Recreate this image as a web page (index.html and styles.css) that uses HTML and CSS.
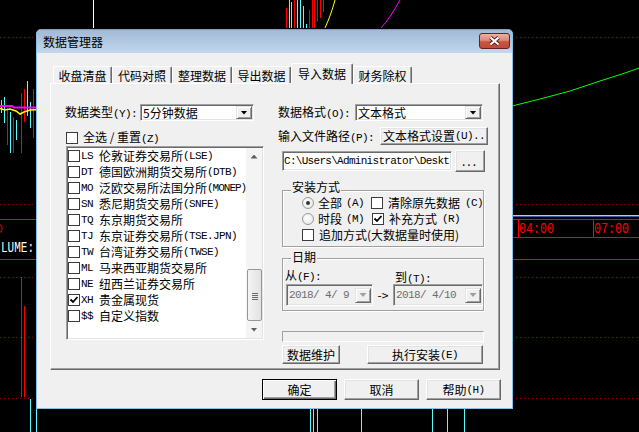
FILE: index.html
```html
<!DOCTYPE html>
<html lang="zh-CN">
<head>
	<meta charset="UTF-8">
	<title>数据管理器</title>
	<link rel="stylesheet" href="styles.css">
</head>
<body>
	<!-- 行情背景 -->
	<svg class="chart" width="639" height="432" viewBox="0 0 639 432">
		<g stroke="#a00000" stroke-dasharray="1 3">
			<line x1="0" y1="37.5" x2="639" y2="37.5"/>
			<line x1="0" y1="204.5" x2="639" y2="204.5"/>
			<line x1="0" y1="277.5" x2="639" y2="277.5"/>
			<line x1="0" y1="337.5" x2="639" y2="337.5"/>
			<line x1="0" y1="398.5" x2="639" y2="398.5"/>
		</g>
		<g stroke="#f00">
			<line x1="0" y1="219.5" x2="639" y2="219.5"/>
			<line x1="0" y1="259.5" x2="639" y2="259.5"/>
			<line x1="480" y1="237.5" x2="639" y2="237.5"/>
			<line x1="518.5" y1="219" x2="518.5" y2="237"/>
			<line x1="593.5" y1="219" x2="593.5" y2="237"/>
			<line x1="21.5" y1="277" x2="21.5" y2="397"/>
			<line x1="24.5" y1="306" x2="24.5" y2="397"/>
			<rect x="-20" y="224.5" width="22" height="8" rx="3" fill="none"/>
		</g>
		<line x1="512" y1="215.5" x2="639" y2="215.5" stroke="#c8c8c8"/>
		<line x1="512" y1="216.5" x2="639" y2="216.5" stroke="#3c5a96"/>
		<text x="519" y="233" fill="#f00" class="chart_txt" textLength="35" lengthAdjust="spacingAndGlyphs">04:00</text>
		<text x="594" y="233" fill="#f00" class="chart_txt" textLength="35" lengthAdjust="spacingAndGlyphs">07:00</text>
		<text x="1" y="252" fill="#fff" class="chart_txt" textLength="33" lengthAdjust="spacingAndGlyphs">LUME:</text>

		<!-- 左侧K线 -->
		<g stroke="#55fcfc">
			<line x1="1.5" y1="100" x2="1.5" y2="113"/>
			<line x1="4.5" y1="97" x2="4.5" y2="123"/>
			<line x1="10.5" y1="112" x2="10.5" y2="153"/>
			<line x1="16.5" y1="120" x2="16.5" y2="140"/>
			<line x1="27.5" y1="81" x2="27.5" y2="116"/>
			<line x1="30.5" y1="102" x2="30.5" y2="128"/>
			<line x1="30.5" y1="399" x2="30.5" y2="432"/>
			<line x1="36.5" y1="400" x2="36.5" y2="432"/>
			<line x1="310.5" y1="400" x2="310.5" y2="432"/>
			<line x1="313.5" y1="400" x2="313.5" y2="432"/>
			<line x1="317.5" y1="400" x2="317.5" y2="432"/>
			<line x1="361.5" y1="400" x2="361.5" y2="432"/>
			<line x1="432.5" y1="400" x2="432.5" y2="432"/>
			<line x1="447.5" y1="400" x2="447.5" y2="432"/>
			<line x1="464.5" y1="400" x2="464.5" y2="432"/>
		</g>
		<g stroke="#f00">
			<line x1="7.5" y1="108" x2="7.5" y2="145"/>
			<line x1="13.5" y1="117" x2="13.5" y2="153"/>
			<line x1="21.5" y1="93" x2="21.5" y2="153"/>
			<line x1="24.5" y1="89" x2="24.5" y2="122"/>
			<line x1="33.5" y1="89" x2="33.5" y2="138"/>
		</g>
		<polyline points="0,106 12,106 14,107.5 40,107.5" fill="none" stroke="#f0f" stroke-width="2"/>
		<polyline points="0,108.5 5,110 10,109 16,111 20,114 24,112 30,110 40,109.5" fill="none" stroke="#ff0" stroke-width="1.5"/>

		<!-- 上方K线 -->
		<line x1="93.5" y1="0" x2="93.5" y2="28" stroke="#fff"/>
		<g stroke="#55fcfc">
			<line x1="289.5" y1="0" x2="289.5" y2="28"/>
			<line x1="291.5" y1="2" x2="291.5" y2="28"/>
			<line x1="297.5" y1="0" x2="297.5" y2="28"/>
			<line x1="300.5" y1="0" x2="300.5" y2="28"/>
			<line x1="303.5" y1="6" x2="303.5" y2="28"/>
			<line x1="306.5" y1="24" x2="306.5" y2="28"/>
		</g>
		<g stroke="#f00">
			<line x1="286.5" y1="8" x2="286.5" y2="28"/>
			<line x1="294.5" y1="0" x2="294.5" y2="28"/>
			<line x1="309.5" y1="10" x2="309.5" y2="28"/>
			<line x1="312.5" y1="0" x2="312.5" y2="28"/>
			<line x1="314.5" y1="0" x2="314.5" y2="28"/>
			<line x1="317.5" y1="0" x2="317.5" y2="21"/>
			<line x1="320.5" y1="0" x2="320.5" y2="18"/>
			<line x1="323.5" y1="0" x2="323.5" y2="12"/>
		</g>
		<polyline points="325,28 328,21 331,13 333,7 335,0" fill="none" stroke="#ff0"/>
		<polyline points="381,28 386,22 391,15 396,7 400,0" fill="none" stroke="#f0f"/>
		<polyline points="512,106 540,99 570,91 600,81 625,73 639,68" fill="none" stroke="#0f0"/>
	</svg>

	<div class="dlg">
		<div class="dlg_title">
			<span>数据管理器</span>
			<a href="javascript:;" class="dlg_close">
				<svg width="13" height="10" viewBox="0 0 13 10">
					<path d="M2.5 1.5 L10.5 8.5 M10.5 1.5 L2.5 8.5" stroke="#4b1e19" stroke-width="4" fill="none"/>
					<path d="M2.5 1.5 L10.5 8.5 M10.5 1.5 L2.5 8.5" stroke="#fff" stroke-width="2.2" fill="none"/>
				</svg>
			</a>
		</div>

		<div class="dlg_body">
			<div class="tabs">
				<div class="tab tab_s">收盘清盘</div>
				<div class="tab">代码对照</div>
				<div class="tab">整理数据</div>
				<div class="tab tab_s">导出数据</div>
				<div class="tab current">导入数据</div>
				<div class="tab tab_s">财务除权</div>
			</div>

			<div class="panel">
				<div class="col_l">
					<div class="row">
						<span class="lbl_type">数据类型<span class="en">(Y):</span></span>
						<div class="sel sel_type"><span class="sel_text">5分钟数据</span><span class="sel_btn"><i></i></span></div>
					</div>
					<div class="chk_row">
						<span class="chk"></span>
						<span>全选 / 重置<span class="en">(Z)</span></span>
					</div>
					<div class="list">
						<div class="list_items">
							<div class="item"><span class="chk"></span><span class="code">LS</span>伦敦证券交易所<span class="en">(LSE)</span></div>
							<div class="item"><span class="chk"></span><span class="code">DT</span>德国欧洲期货交易所<span class="en">(DTB)</span></div>
							<div class="item"><span class="chk"></span><span class="code">MO</span>泛欧交易所法国分所<span class="en en_tight">(MONEP)</span></div>
							<div class="item"><span class="chk"></span><span class="code">SN</span>悉尼期货交易所<span class="en">(SNFE)</span></div>
							<div class="item"><span class="chk"></span><span class="code">TQ</span>东京期货交易所</div>
							<div class="item"><span class="chk"></span><span class="code">TJ</span>东京证券交易所<span class="en">(TSE.JPN)</span></div>
							<div class="item"><span class="chk"></span><span class="code">TW</span>台湾证券交易所<span class="en">(TWSE)</span></div>
							<div class="item"><span class="chk"></span><span class="code">ML</span>马来西亚期货交易所</div>
							<div class="item"><span class="chk"></span><span class="code">NE</span>纽西兰证券交易所</div>
							<div class="item"><span class="chk on"><svg width="10" height="10" viewBox="0 0 10 10"><path d="M1.5 4.5 L4 7 L8.5 2" stroke="#000" stroke-width="1.8" fill="none"/></svg></span><span class="code">XH</span>贵金属现货</div>
							<div class="item"><span class="chk"></span><span class="code">$$</span>自定义指数</div>
						</div>
						<div class="scroll">
							<div class="scroll_btn"><i class="arr_up"></i></div>
							<div class="scroll_track"><div class="thumb"><span class="grip"></span></div></div>
							<div class="scroll_btn"><i class="arr_down"></i></div>
						</div>
					</div>
				</div>

				<div class="col_r">
					<div class="row">
						<span class="lbl_fmt">数据格式<span class="en">(O):</span></span>
						<div class="sel sel_fmt"><span class="sel_text">文本格式</span><span class="sel_btn"><i></i></span></div>
					</div>
					<div class="row2">
						<span class="lbl_path">输入文件路径<span class="en">(P):</span></span>
						<button class="btn btn_set">文本格式设置<span class="en">(U)..</span></button>
					</div>
					<div class="row3">
						<div class="path">C:\Users\Administrator\Deskt</div>
						<button class="btn btn_more">...</button>
					</div>

					<div class="group group_mode">
						<span class="group_title">安装方式</span>
						<div class="grow">
							<label class="opt"><span class="radio on"></span>全部<span class="en">(A)</span></label>
							<label class="opt opt_c"><span class="chk"></span>清除原先数据<span class="en">(C)</span></label>
						</div>
						<div class="grow">
							<label class="opt"><span class="radio"></span>时段<span class="en">(M)</span></label>
							<label class="opt opt_c"><span class="chk on"><svg width="10" height="10" viewBox="0 0 10 10"><path d="M1.5 4.5 L4 7 L8.5 2" stroke="#000" stroke-width="1.8" fill="none"/></svg></span>补充方式<span class="en">(R)</span></label>
						</div>
						<div class="grow">
							<label class="opt opt_c"><span class="chk"></span>追加方式(大数据量时使用)</label>
						</div>
					</div>

					<div class="group group_date">
						<span class="group_title">日期</span>
						<div class="date_row">
							<div class="date_col date_from">
								<span class="date_lbl">从<span class="en">(F):</span></span>
								<div class="date"><span class="date_text">2018/ 4/ 9</span><span class="sel_btn off"><i></i></span></div>
							</div>
							<span class="date_arrow">-&gt;</span>
							<div class="date_col date_to">
								<span class="date_lbl">到<span class="en">(T):</span></span>
								<div class="date"><span class="date_text">2018/ 4/10</span><span class="sel_btn off"><i></i></span></div>
							</div>
						</div>
					</div>

					<div class="progress"></div>

					<div class="act_row">
						<button class="btn btn_keep">数据维护</button>
						<button class="btn btn_run">执行安装<span class="en">(E)</span></button>
					</div>
				</div>
			</div>

			<div class="footer">
				<button class="btn btn_def">确定</button>
				<button class="btn">取消</button>
				<button class="btn">帮助<span class="en">(H)</span></button>
			</div>
		</div>
	</div>
</body>
</html>
```

FILE: styles.css
```css
body {
	margin: 0;
	width: 639px;
	height: 432px;
	overflow: hidden;
	position: relative;
	background: #000;
	font: 12px/14px "Noto Sans CJK SC", "Noto Sans", sans-serif;
	color: #000;
}

.chart { position: absolute; left: 0; top: 0; }
.chart_txt { font-family: "Liberation Mono", monospace; font-size: 14px; }

/* 半角字符(宋体宽度) */
.en {
	font: 11px "Liberation Mono", monospace;
	letter-spacing: -0.6px;
}
.en_tight { letter-spacing: -1px; }

/* 对话框 */
.dlg {
	position: absolute;
	left: 36px;
	top: 29px;
	width: 477px;
	height: 380px;
	box-sizing: border-box;
	border: 1px solid #86c2e6;
	border-top-color: #7f9cbd;
	border-radius: 5px 5px 0 0;
	background: #f0f0f0;
	display: flex;
	flex-direction: column;
}

.dlg_title {
	height: 23px;
	flex-shrink: 0;
	display: flex;
	justify-content: space-between;
	align-items: center;
	padding: 0 2px 0 6px;
	background: linear-gradient(#a1b9d6, #c3d7ee);
	border-radius: 4px 4px 0 0;
}

.dlg_close {
	align-self: flex-start;
	margin-top: 3px;
	width: 31px;
	height: 16px;
	box-sizing: border-box;
	border: 1px solid #5d2620;
	border-radius: 3px;
	background: linear-gradient(#eab0a4 0%, #dc8a7b 45%, #c95542 55%, #c24a36 100%);
	display: flex;
	align-items: center;
	justify-content: center;
}

.dlg_close svg { display: block; }

.dlg_body { flex: 1; padding: 10px 11px 0 13px; }

/* 标签页 */
.tabs {
	display: flex;
	align-items: flex-end;
	height: 20px;
	padding-left: 3px;
	position: relative;
	z-index: 1;
}

.tab {
	box-sizing: border-box;
	width: 60px;
	height: 17px;
	border: 1px solid;
	border-color: #fff #696969 transparent #fff;
	border-bottom: 0;
	border-radius: 2px 2px 0 0;
	box-shadow: inset -1px 0 #a0a0a0;
	padding-top: 2px;
	text-align: center;
	line-height: 14px;
}

.tab_s { width: 59px; }

.tab.current {
	width: 62px;
	height: 21px;
	margin-bottom: -1px;
	padding-top: 3px;
	background: #f0f0f0;
}

.panel {
	box-sizing: border-box;
	width: 450px;
	height: 287px;
	border: 1px solid;
	border-color: #fff #696969 #696969 #fff;
	box-shadow: inset -1px -1px #a0a0a0;
	display: flex;
	gap: 14px;
	padding: 20px 11px 0 14px;
}

.col_l { width: 199px; display: flex; flex-direction: column; }
.col_r { width: 210px; display: flex; flex-direction: column; }

.row { display: flex; align-items: center; height: 17px; flex-shrink: 0; }
.lbl_type { width: 75px; }
.lbl_fmt { width: 77px; }

/* 下拉框 */
.sel {
	box-sizing: border-box;
	height: 17px;
	border: 1px solid;
	border-color: #a0a0a0 #fff #fff #a0a0a0;
	box-shadow: inset 1px 1px #696969, inset -1px -1px #e3e3e3;
	background: #fff;
	padding: 1px;
	display: flex;
}
.sel_type { width: 114px; }
.sel_fmt { width: 128px; }

.sel_text { flex: 1; padding-left: 1px; line-height: 13px; background: #fff; }

.sel_btn {
	box-sizing: border-box;
	width: 16px;
	height: 13px;
	flex-shrink: 0;
	background: #f0f0f0;
	border: 1px solid;
	border-color: #e3e3e3 #696969 #696969 #e3e3e3;
	box-shadow: inset 1px 1px #fff, inset -1px -1px #a0a0a0;
	display: flex;
	align-items: center;
	justify-content: center;
}
.sel_btn i {
	display: block;
	width: 7px;
	height: 4px;
	background: #000;
	clip-path: polygon(0 0, 100% 0, 50% 100%);
}
.sel_btn.off { height: 15px; }
.sel_btn.off i { background: #a0a0a0; }

/* 复选框 */
.chk_row {
	margin-top: 10px;
	height: 13px;
	display: flex;
	align-items: center;
	gap: 5px;
	padding-left: 1px;
}

.chk {
	box-sizing: border-box;
	width: 12px;
	height: 12px;
	flex-shrink: 0;
	border: 1px solid #3c3c3c;
	background: #fff;
}
.chk svg { display: block; }

.radio {
	box-sizing: border-box;
	width: 12px;
	height: 12px;
	flex-shrink: 0;
	border-radius: 50%;
	border: 1px solid #9a9a9a;
	background: radial-gradient(circle at 40% 40%, #fff, #e2e2e2);
	display: flex;
	align-items: center;
	justify-content: center;
}
.radio.on::after {
	content: "";
	width: 4px;
	height: 4px;
	border-radius: 50%;
	background: #333;
}

/* 市场列表 */
.list {
	margin: 2px 0 0 1px;
	width: 198px;
	height: 194px;
	box-sizing: border-box;
	border: 1px solid;
	border-color: #a0a0a0 #fff #fff #a0a0a0;
	box-shadow: inset 1px 1px #696969, inset -1px -1px #e3e3e3;
	padding: 1px;
	background: #fff;
	display: flex;
}

.list_items { flex: 1; min-width: 0; }

.item {
	height: 16px;
	display: flex;
	align-items: center;
	white-space: nowrap;
}
.item .chk { margin-right: 1px; }

.code {
	width: 18px;
	flex-shrink: 0;
	font: 11px "Liberation Mono", monospace;
	letter-spacing: -0.6px;
}

.scroll {
	width: 16px;
	flex-shrink: 0;
	display: flex;
	flex-direction: column;
	background: #f4f4f4;
}
.scroll_btn {
	height: 17px;
	display: flex;
	align-items: center;
	justify-content: center;
}
.scroll_btn i {
	display: block;
	width: 7px;
	height: 4px;
	background: #606060;
}
.arr_up { clip-path: polygon(50% 0, 100% 100%, 0 100%); }
.arr_down { clip-path: polygon(0 0, 100% 0, 50% 100%); }

.scroll_track { flex: 1; }

.thumb {
	box-sizing: border-box;
	margin: 104px 0 0 1px;
	width: 15px;
	height: 52px;
	border: 1px solid #979797;
	border-radius: 2px;
	background: linear-gradient(90deg, #f4f4f4, #e2e2e2);
	display: flex;
	align-items: center;
	justify-content: center;
}
.grip {
	width: 6px;
	height: 1px;
	margin-top: -4px;
	background: #6a6a6a;
	box-shadow: 0 2px #6a6a6a, 0 4px #6a6a6a, 0 6px #6a6a6a;
}

/* 右侧 */
.row2 { margin-top: 6px; height: 18px; display: flex; align-items: center; }
.lbl_path { width: 102px; }

.btn {
	box-sizing: border-box;
	padding: 0;
	font: inherit;
	color: #000;
	background: #f0f0f0;
	border: 1px solid;
	border-color: #fff #696969 #696969 #fff;
	box-shadow: inset -1px -1px #a0a0a0, inset 1px 1px #e3e3e3;
	display: flex;
	align-items: center;
	justify-content: center;
	white-space: nowrap;
}

.btn_set { width: 108px; height: 18px; }

.row3 {
	margin-top: 5px;
	height: 22px;
	display: flex;
	align-items: center;
	gap: 3px;
	padding-left: 4px;
}

.path {
	box-sizing: border-box;
	width: 170px;
	height: 20px;
	border: 1px solid;
	border-color: #a0a0a0 #fff #fff #a0a0a0;
	box-shadow: inset 1px 1px #696969, inset -1px -1px #e3e3e3;
	background: #fff;
	padding: 0 1px;
	white-space: nowrap;
	font: 11px/18px "Liberation Mono", monospace;
	letter-spacing: -0.7px;
}

.btn_more { width: 30px; height: 22px; letter-spacing: 2px; }

/* 分组框 */
.group {
	box-sizing: border-box;
	margin-left: 4px;
	width: 202px;
	border: 1px solid #a0a0a0;
	box-shadow: inset 1px 1px #fff, 1px 1px #fff;
	display: flex;
	flex-direction: column;
}
.group_title {
	align-self: flex-start;
	margin: -8px 0 0 8px;
	padding: 0 1px;
	line-height: 12px;
	background: #f0f0f0;
}

.group_mode { margin-top: 18px; padding-bottom: 3px; }
.group_mode .group_title { margin-top: -10px; margin-bottom: 2px; }

.grow { height: 16px; display: flex; align-items: center; padding-left: 19px; }
.opt { display: flex; align-items: center; gap: 4px; width: 70px; white-space: nowrap; }
.opt_c { gap: 5px; width: auto; }

.group_date { margin-top: 11px; padding-bottom: 4px; }

.date_row { display: flex; align-items: flex-end; padding-left: 3px; }
.date_col { display: flex; flex-direction: column; }
.date_from { width: 87px; }
.date_to { width: 90px; }
.date_lbl { line-height: 14px; }
.date_from .date_lbl { margin: 5px 0 1px -1px; }
.date_to .date_lbl { margin: 7px 0 -1px 2px; }

.date {
	box-sizing: border-box;
	height: 22px;
	border: 1px solid;
	border-color: #a0a0a0 #fff #fff #a0a0a0;
	box-shadow: inset 1px 1px #696969, inset -1px -1px #e3e3e3;
	background: #f0f0f0;
	padding: 1px 1px 1px 2px;
	display: flex;
	align-items: center;
}
.date_text {
	flex: 1;
	white-space: pre;
	color: #6d6d6d;
	font: 11px "Liberation Mono", monospace;
	letter-spacing: -0.6px;
}

.date_arrow { width: 20px; line-height: 22px; text-align: center; }

.progress {
	box-sizing: border-box;
	margin: 20px 0 0 4px;
	width: 202px;
	height: 11px;
	border: 1px solid;
	border-color: #a0a0a0 #fff #fff #a0a0a0;
	background: #f0f0f0;
}

.act_row {
	margin: 3px 0 0 4px;
	width: 201px;
	display: flex;
	justify-content: space-between;
}
.btn_keep { width: 58px; height: 19px; }
.btn_run { width: 116px; height: 19px; }

/* 底部按钮 */
.footer {
	margin-top: 9px;
	display: flex;
	justify-content: flex-end;
	gap: 7px;
}
.footer .btn { width: 75px; height: 21px; }
.footer .btn_def {
	border: 1px solid #000;
	box-shadow: inset 1px 1px #fff, inset -1px -1px #696969, inset -2px -2px #a0a0a0;
}
```
